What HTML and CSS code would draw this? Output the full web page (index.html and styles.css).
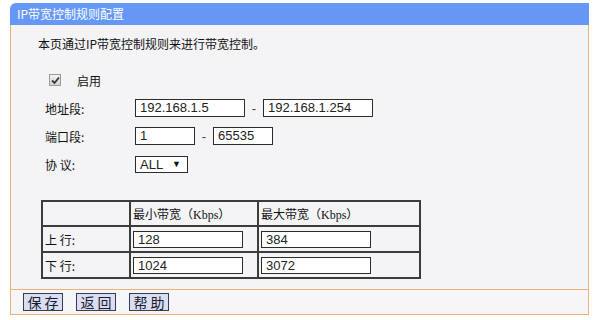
FILE: index.html
```html
<!DOCTYPE html>
<html lang="zh-CN">
<head>
<meta charset="utf-8">
<title>IP带宽控制规则配置</title>
<link rel="stylesheet" href="styles.css">
</head>
<body>
<div class="panel">
  <div class="panel-head">IP带宽控制规则配置</div>
  <div class="panel-body">
    <div class="intro">本页通过IP带宽控制规则来进行带宽控制。</div>
    <div class="enable">
      <span class="check"><svg width="9" height="9" viewBox="0 0 9 9"><path d="M1 4.5 L3.5 7 L8 1.5" fill="none" stroke="#333" stroke-width="1.8"/></svg></span>
      <span class="enable-label">启用</span>
    </div>
    <div class="form">
      <div class="label">地址段:</div>
      <div class="ctrl"><span class="input w110">192.168.1.5</span><span class="dash">-</span><span class="input w110">192.168.1.254</span></div>
      <div class="label">端口段:</div>
      <div class="ctrl"><span class="input w60">1</span><span class="dash">-</span><span class="input w60">65535</span></div>
      <div class="label">协&nbsp;议:</div>
      <div class="ctrl"><span class="select"><span>ALL</span><span class="arrow">▼</span></span></div>
    </div>
    <table class="bw">
      <colgroup><col class="c1"><col class="c2"><col class="c3"></colgroup>
      <tr class="hrow"><td></td><td>最小带宽（<span class="kb">Kbps</span>）</td><td>最大带宽（<span class="kb">Kbps</span>）</td></tr>
      <tr class="drow"><td class="rl">上&nbsp;行:</td><td><span class="input w110">128</span></td><td><span class="input w110">384</span></td></tr>
      <tr class="drow"><td class="rl">下&nbsp;行:</td><td><span class="input w110">1024</span></td><td><span class="input w110">3072</span></td></tr>
    </table>
  </div>
  <div class="panel-foot">
    <span class="btn">保存</span>
    <span class="btn">返回</span>
    <span class="btn">帮助</span>
  </div>
</div>
</body>
</html>
```
FILE: styles.css
```css
html, body {
  margin: 0;
  padding: 0;
  background: #ffffff;
}
body {
  font-family: "Noto Sans CJK SC", "Liberation Sans", sans-serif;
  font-size: 12px;
  color: #111111;
}
.panel {
  width: 579px;
  margin: 3px 0 0 10px;
}
.panel-head {
  height: 22px;
  line-height: 22px;
  background: #6597f7;
  color: #ffffff;
  padding-left: 7px;
  border-radius: 6px 0 0 0;
  font-size: 12px;
}
.panel-body {
  background: #f4f4f6;
  border-left: 1px solid #ebb27a;
  border-right: 1px solid #ebb27a;
  height: 264px;
  box-sizing: border-box;
  padding-top: 9px;
}
.intro {
  height: 20px;
  line-height: 20px;
  margin-left: 27px;
}
.enable {
  display: flex;
  align-items: center;
  height: 20px;
  margin-top: 16px;
  margin-left: 38px;
}
.check {
  width: 10px;
  height: 10px;
  border: 1px solid #9a9a9a;
  background: linear-gradient(#f2f2f2, #d4d4d4);
  display: flex;
  align-items: center;
  justify-content: center;
}
.enable-label {
  margin-left: 16px;
}
.form {
  display: grid;
  grid-template-columns: 90px auto;
  grid-auto-rows: 28px;
  margin-top: 4px;
  margin-left: 34px;
  align-items: center;
}
.ctrl {
  display: flex;
  align-items: center;
}
.input {
  display: inline-block;
  box-sizing: border-box;
  height: 18px;
  line-height: 16px;
  border: 1px solid #2c2c2c;
  background: #ffffff;
  padding-left: 4px;
  font-family: "Liberation Sans", Arial, sans-serif;
  font-size: 13px;
  color: #222;
}
.w110 { width: 110px; }
.w60 { width: 60px; }
.dash {
  width: 18px;
  text-align: center;
  font-family: "Liberation Sans", Arial, sans-serif;
  font-size: 13px;
  color: #444;
}
.select {
  display: inline-flex;
  align-items: center;
  justify-content: space-between;
  box-sizing: border-box;
  width: 53px;
  height: 17px;
  border: 1px solid #2c2c2c;
  background: #ffffff;
  padding: 0 6px 0 4px;
  font-family: "Liberation Sans", Arial, sans-serif;
  font-size: 13px;
  color: #222;
}
.arrow {
  font-size: 9px;
  color: #111;
}
.bw {
  margin-top: 22px;
  margin-left: 30px;
  border-collapse: collapse;
  border: 2px solid #3c3c3c;
  width: 378px;
  table-layout: fixed;
}
.c1 { width: 88px; }
.c2 { width: 128px; }
.c3 { width: 162px; }
.bw td {
  border: 2px solid #3c3c3c;
  padding: 0 0 0 2px;
  height: 23px;
  vertical-align: middle;
}
.bw tr.drow td {
  height: 24px;
}
.kb {
  font-family: "Liberation Serif", serif;
  font-size: 12px;
}
.bw td .input {
  display: block;
  height: 17px;
  line-height: 15px;
}
.panel-foot {
  display: flex;
  gap: 13px;
  align-items: flex-start;
  height: 26px;
  box-sizing: border-box;
  padding: 3px 0 0 12px;
  background: #f6f6f8;
  border: 1px solid #ebb27a;
}
.btn {
  box-sizing: border-box;
  width: 40px;
  height: 18px;
  line-height: 16px;
  text-align: center;
  border: 1px solid #3a3a4a;
  background: #d9def3;
  font-size: 14px;
  letter-spacing: 3px;
  padding-left: 3px;
  color: #1a1a2a;
}
```
